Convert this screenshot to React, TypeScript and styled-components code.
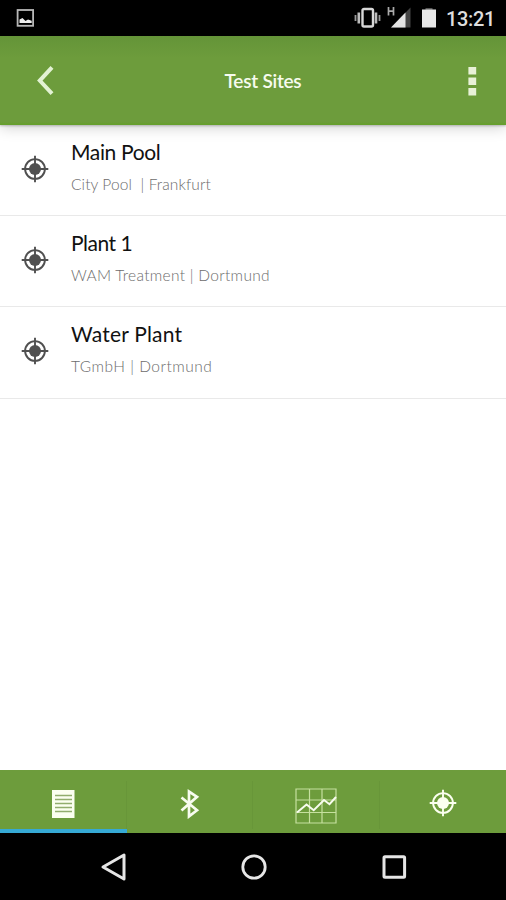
import React from "react";
import styled, { createGlobalStyle } from "styled-components";

const GlobalStyle = createGlobalStyle`
  html, body { margin: 0; padding: 0; background: #fff; }
  * { box-sizing: border-box; }
  svg { display: block; flex: none; }
`;

const Screen = styled.div`
  width: 506px;
  height: 900px;
  display: flex;
  flex-direction: column;
  overflow: hidden;
  background: #fff;
  font-family: Lato, "Open Sans", sans-serif;
`;

const StatusBar = styled.div`
  height: 36px;
  flex: none;
  display: flex;
  align-items: center;
  justify-content: space-between;
  padding: 0 11px 0 16px;
  background: #000;
`;

const StatusIcons = styled.div`
  display: flex;
  align-items: center;
`;

const Signal = styled.div`
  margin: 0 10px 0 6px;
`;

const Clock = styled.span`
  margin-left: 9px;
  width: 49px;
  font: 500 20px/36px Roboto, sans-serif;
  letter-spacing: -0.35px;
  white-space: nowrap;
  color: #dedede;
  padding-top: 2px;
`;

const Header = styled.header`
  height: 89px;
  flex: none;
  display: flex;
  align-items: center;
  justify-content: space-between;
  padding: 1px 28px 0 36px;
  background: linear-gradient(#649438 0, #6d9c3c 22px, #6d9c3c 86px, #669f2d 88px);
  box-shadow: 0 1px 2px rgba(0, 0, 0, 0.22), 0 2px 14px rgba(0, 0, 0, 0.2);
  z-index: 1;
`;

const Heading = styled.h1`
  margin: 0 0 0 4px;
  font-size: 19px;
  line-height: 24px;
  font-weight: 600;
  letter-spacing: -0.25px;
  white-space: nowrap;
  color: #f7fbef;
`;

const SiteList = styled.ul`
  flex: 1;
  margin: 0;
  padding: 0;
  list-style: none;
`;

const SiteRow = styled.li`
  height: 91px;
  display: flex;
  align-items: flex-start;
  padding: 13px 0 0 21px;
  border-bottom: 1px solid #e9e9e9;

  & > svg { margin-top: 17px; }
  &:last-child { height: 92px; }
`;

const SiteText = styled.div`
  margin-left: 22px;
`;

const SiteName = styled.div<{ $tracking: number }>`
  font-size: 21px;
  line-height: 28px;
  letter-spacing: ${(p) => p.$tracking}px;
  color: #111;
  white-space: pre;
`;

const SiteDetail = styled.div<{ $tracking: number }>`
  margin-top: 7px;
  font-size: 15.5px;
  line-height: 22px;
  font-weight: 300;
  letter-spacing: ${(p) => p.$tracking}px;
  color: #6c6c6c;
  white-space: pre;
`;

const TabBar = styled.nav`
  height: 63px;
  flex: none;
  display: grid;
  grid-template-columns: repeat(4, 1fr);
  background: #6d9c3c;
`;

const Tab = styled.div<{ $active?: boolean; $drop: number }>`
  display: flex;
  align-items: center;
  justify-content: center;
  padding-top: ${(p) => p.$drop}px;
  border-bottom: 4px solid ${(p) => (p.$active ? "#36a9d5" : "transparent")};
  background: linear-gradient(#689639, #689639) right 11px / 1px 48px no-repeat;
  &:last-child { background: none; }
`;

const SystemNav = styled.div`
  height: 67px;
  flex: none;
  display: flex;
  justify-content: center;
  align-items: center;
  gap: 112px;
  padding-left: 1px;
  background: #000;
`;

const Target = ({ color }: { color: string }) => (
  <svg width="28" height="28" viewBox="0 0 28 28">
    <circle cx="14" cy="14" r="9.9" fill="none" stroke={color} strokeWidth="1.9" />
    <circle cx="14" cy="14" r="6" fill={color} />
    <path d="M14 .7v26.6M.7 14h26.6" stroke={color} strokeWidth="1.9" />
  </svg>
);

const PictureIcon = () => (
  <svg width="19" height="18" viewBox="0 0 19 18">
    <rect x="1.6" y="1" width="15.5" height="15.8" fill="none" stroke="#b8b8b8" strokeWidth="1.8" />
    <path d="M3.5 14V10.5L6.5 9l3 3 2.5-1.5 3.7 1.2V14z" fill="#eee" />
  </svg>
);

const VibrateIcon = () => (
  <svg width="27" height="22" viewBox="0 0 27 22">
    <rect x="8.5" y="2" width="10.5" height="17.5" rx="1.5" fill="none" stroke="#d8d8d8" strokeWidth="2.4" />
    <path d="M1.5 8v6M25.5 8v6" stroke="#999" strokeWidth="1.8" />
    <path d="M4.8 5.5v11M22 5.5v11" stroke="#bcbcbc" strokeWidth="2.6" />
  </svg>
);

const SignalIcon = () => (
  <svg width="24" height="22" viewBox="0 0 24 22">
    <path d="M1.5 0v8.5M6.5 0v8.5M1.5 4.2h5" stroke="#aaa" strokeWidth="1.7" />
    <path d="M23.5.5V20.5H4z" fill="#444" />
    <path d="M18.5 5.6V20.5H4z" fill="#e4e4e4" />
  </svg>
);

const BatteryIcon = () => (
  <svg width="16" height="22" viewBox="0 0 16 22">
    <path d="M4.5 1h7v2h-7z" fill="#555" />
    <path d="M1 2.5h14v18H1z" fill="#e8e8e8" />
  </svg>
);

const BackChevron = () => (
  <svg width="20" height="32" viewBox="0 0 20 32">
    <path d="M16 2.3 3.8 15.6 16 28.6" fill="none" stroke="#e3f2d4" strokeWidth="4" />
  </svg>
);

const MoreIcon = () => (
  <svg width="12" height="30" viewBox="0 0 12 30">
    <path d="M2.4 1h7.8v7.6H2.4zM2.4 11.5h7.8v7.6H2.4zM2.4 22h7.8v7.6H2.4z" fill="#e8f1d8" />
  </svg>
);

const DocumentIcon = () => (
  <svg width="24" height="30" viewBox="0 0 24 30">
    <path d="M1 1h22.5v28H1z" fill="#fbfff0" />
    <path d="M4 6.5h17M4 10.5h17M4 14.5h17M4 18.5h17M4 22.5h17" stroke="#91ad6d" strokeWidth="1.4" />
  </svg>
);

const BluetoothIcon = () => (
  <svg width="20" height="30" viewBox="0 0 20 30">
    <path d="m1.5 8.5 15.5 12.7-8 6.2V2.6l8 5.2L1.5 21.5" fill="none" stroke="#f7fcef" strokeWidth="2.7" />
  </svg>
);

const ChartIcon = () => (
  <svg width="42" height="36" viewBox="0 0 42 36">
    <path d="M1 1h40v34H1zM14.5 1v34M27 1v34M1 12h40M1 24.5h40" fill="none" stroke="#c6e09f" strokeWidth="1.2" />
    <path d="m2 24.5 9.5-8 7.2 5.7L29 12l5.5 4.2L41 9" fill="none" stroke="#f8fcef" strokeWidth="2" />
  </svg>
);

const NavBack = () => (
  <svg width="28" height="30" viewBox="0 0 28 30">
    <path d="M24 3v24L3 15z" fill="none" stroke="#e6e6e6" strokeWidth="3" strokeLinejoin="round" />
  </svg>
);

const NavHome = () => (
  <svg width="28" height="28" viewBox="0 0 28 28">
    <circle cx="14" cy="14" r="11.2" fill="none" stroke="#e6e6e6" strokeWidth="2.8" />
  </svg>
);

const NavRecent = () => (
  <svg width="28" height="28" viewBox="0 0 28 28">
    <rect x="4" y="3.7" width="20.6" height="20.6" rx="1" fill="none" stroke="#e6e6e6" strokeWidth="3" />
  </svg>
);

const sites = [
  { name: "Main Pool", nameTracking: -0.35, detail: "City Pool  | Frankfurt", detailTracking: 0.1 },
  { name: "Plant 1", nameTracking: -0.5, detail: "WAM Treatment | Dortmund", detailTracking: 0.3 },
  { name: "Water Plant", nameTracking: 0.2, detail: "TGmbH | Dortmund", detailTracking: 0.5 },
];

export default function App() {
  return (
    <Screen>
      <GlobalStyle />
      <StatusBar>
        <PictureIcon />
        <StatusIcons>
          <VibrateIcon />
          <Signal><SignalIcon /></Signal>
          <BatteryIcon />
          <Clock>13:21</Clock>
        </StatusIcons>
      </StatusBar>
      <Header>
        <BackChevron />
        <Heading>Test Sites</Heading>
        <MoreIcon />
      </Header>
      <SiteList>
        {sites.map((site) => (
          <SiteRow key={site.name}>
            <Target color="#505050" />
            <SiteText>
              <SiteName $tracking={site.nameTracking}>{site.name}</SiteName>
              <SiteDetail $tracking={site.detailTracking}>{site.detail}</SiteDetail>
            </SiteText>
          </SiteRow>
        ))}
      </SiteList>
      <TabBar>
        <Tab $active $drop={9}><DocumentIcon /></Tab>
        <Tab $drop={9}><BluetoothIcon /></Tab>
        <Tab $drop={12}><ChartIcon /></Tab>
        <Tab $drop={7}><Target color="#fbfff0" /></Tab>
      </TabBar>
      <SystemNav>
        <NavBack />
        <NavHome />
        <NavRecent />
      </SystemNav>
    </Screen>
  );
}
